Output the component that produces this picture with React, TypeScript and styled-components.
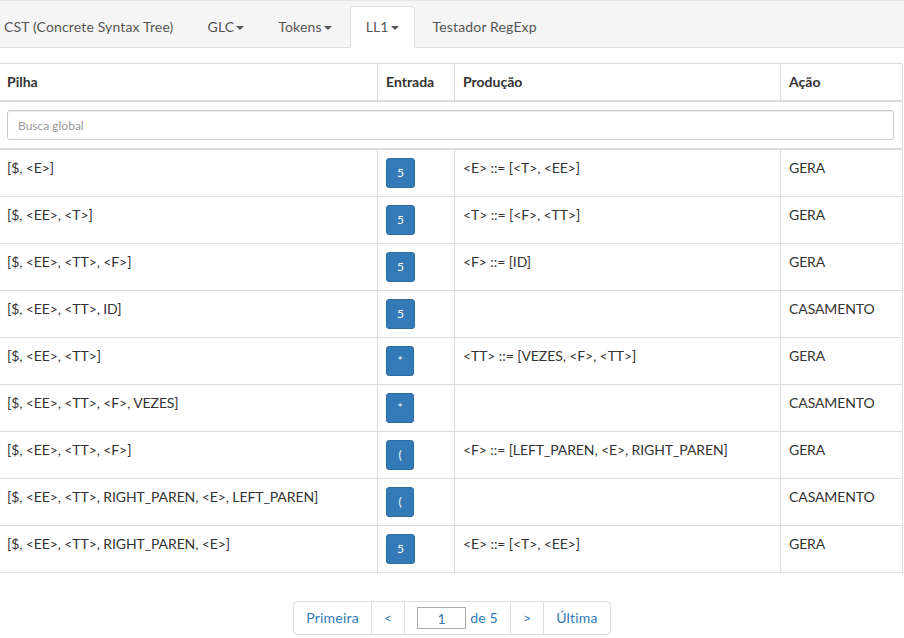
import React from "react";
import styled, { createGlobalStyle } from "styled-components";

const Global = createGlobalStyle`
  * { box-sizing: border-box; }
  html, body { margin: 0; padding: 0; background: #fff; }
  body {
    font-family: Lato, "Open Sans", "Liberation Sans", sans-serif;
    font-size: 14px;
    line-height: 20px;
    color: #333;
    overflow: hidden;
  }
`;

const NavBar = styled.div`
  background: #f5f5f5;
  border-top: 1px solid #e5e5e5;
  border-bottom: 1px solid #ddd;
  padding-top: 5px;
  height: 48px;
`;

const Tabs = styled.ul`
  display: flex;
  list-style: none;
  margin: 0 0 0 -12px;
  padding: 0;
`;

const Tab = styled.li<{ $active?: boolean }>`
  margin-right: 2px;
  margin-bottom: -1px;
  padding: 10px 15px;
  line-height: 20px;
  height: 42px;
  white-space: nowrap;
  letter-spacing: 0.15px;
  color: #555;
  border: 1px solid ${(p) => (p.$active ? "#ddd" : "transparent")};
  border-bottom-color: ${(p) => (p.$active ? "#fff" : "transparent")};
  border-radius: 4px 4px 0 0;
  background: ${(p) => (p.$active ? "#fff" : "transparent")};
`;

const Caret = styled.span`
  display: inline-block;
  width: 0;
  height: 0;
  margin-left: 2px;
  vertical-align: middle;
  border-top: 4px solid #555;
  border-left: 4px solid transparent;
  border-right: 4px solid transparent;
`;

const Table = styled.div`
  margin: 15px 0 0 -2px;
  width: 905px;
  border-top: 1px solid #ddd;
`;

const Row = styled.div<{ $thick?: boolean }>`
  display: grid;
  grid-template-columns: 379px 77px 326px 123px;
  border-bottom: ${(p) => (p.$thick ? "2px" : "1px")} solid #ddd;
`;

const Cell = styled.div<{ $last?: boolean }>`
  padding: 8px;
  border-left: 1px solid #ddd;
  border-right: ${(p) => (p.$last ? "1px solid #ddd" : "none")};
  white-space: nowrap;
  letter-spacing: -0.1px;
  min-height: 46px;
`;

const HeadCell = styled(Cell)`
  font-weight: 700;
  letter-spacing: 0;
  min-height: 36px;
`;

const SearchCell = styled.div`
  grid-column: 1 / -1;
  padding: 8px;
  border-left: 1px solid #ddd;
  border-right: 1px solid #ddd;
`;

const SearchInput = styled.input`
  display: block;
  width: 100%;
  height: 30px;
  padding: 5px 10px;
  font-family: inherit;
  font-size: 12px;
  line-height: 18px;
  color: #555;
  border: 1px solid #ccc;
  border-radius: 3px;
  box-shadow: inset 0 1px 1px rgba(0, 0, 0, 0.075);
  outline: none;
  &::placeholder { color: #999; }
`;

const TokenButton = styled.span`
  display: inline-block;
  min-width: 28px;
  height: 30px;
  padding: 5px 10px;
  font-size: 12px;
  line-height: 18px;
  text-align: center;
  letter-spacing: 0;
  color: #fff;
  background: #337ab7;
  border: 1px solid #2e6da4;
  border-radius: 3px;
`;

const Pager = styled.div`
  display: flex;
  justify-content: center;
  margin-top: 28px;
`;

const PageList = styled.div`
  display: inline-flex;
  border: 1px solid #ddd;
  border-radius: 4px;
`;

const PageItem = styled.span<{ $first?: boolean }>`
  display: flex;
  align-items: center;
  gap: 4px;
  height: 32px;
  padding: 0 12px;
  color: #337ab7;
  letter-spacing: 0.2px;
  border-left: ${(p) => (p.$first ? "none" : "1px solid #ddd")};
  white-space: nowrap;
`;

const PageInput = styled.input`
  width: 49px;
  height: 22px;
  padding: 0 2px;
  font-family: inherit;
  font-size: 14px;
  color: #337ab7;
  text-align: center;
  border: 1px solid #a9a9a9;
  outline: none;
`;

type Step = [string, string, string, string];

const steps: Step[] = [
  ["[$, <E>]", "5", "<E> ::= [<T>, <EE>]", "GERA"],
  ["[$, <EE>, <T>]", "5", "<T> ::= [<F>, <TT>]", "GERA"],
  ["[$, <EE>, <TT>, <F>]", "5", "<F> ::= [ID]", "GERA"],
  ["[$, <EE>, <TT>, ID]", "5", "", "CASAMENTO"],
  ["[$, <EE>, <TT>]", "*", "<TT> ::= [VEZES, <F>, <TT>]", "GERA"],
  ["[$, <EE>, <TT>, <F>, VEZES]", "*", "", "CASAMENTO"],
  ["[$, <EE>, <TT>, <F>]", "(", "<F> ::= [LEFT_PAREN, <E>, RIGHT_PAREN]", "GERA"],
  ["[$, <EE>, <TT>, RIGHT_PAREN, <E>, LEFT_PAREN]", "(", "", "CASAMENTO"],
  ["[$, <EE>, <TT>, RIGHT_PAREN, <E>]", "5", "<E> ::= [<T>, <EE>]", "GERA"],
];

export default function App() {
  return (
    <>
      <Global />
      <NavBar>
        <Tabs>
          <Tab>CST (Concrete Syntax Tree)</Tab>
          <Tab>
            GLC<Caret />
          </Tab>
          <Tab>
            Tokens<Caret />
          </Tab>
          <Tab $active>
            LL1<Caret />
          </Tab>
          <Tab>Testador RegExp</Tab>
        </Tabs>
      </NavBar>
      <Table>
        <Row $thick>
          <HeadCell>Pilha</HeadCell>
          <HeadCell>Entrada</HeadCell>
          <HeadCell>Produção</HeadCell>
          <HeadCell $last>Ação</HeadCell>
        </Row>
        <Row $thick>
          <SearchCell>
            <SearchInput placeholder="Busca global" />
          </SearchCell>
        </Row>
        {steps.map((s, i) => (
          <Row key={i}>
            <Cell>{s[0]}</Cell>
            <Cell>
              <TokenButton>{s[1]}</TokenButton>
            </Cell>
            <Cell>{s[2]}</Cell>
            <Cell $last>{s[3]}</Cell>
          </Row>
        ))}
      </Table>
      <Pager>
        <PageList>
          <PageItem $first>Primeira</PageItem>
          <PageItem>&lt;</PageItem>
          <PageItem>
            <PageInput defaultValue="1" />
            de 5
          </PageItem>
          <PageItem>&gt;</PageItem>
          <PageItem>Última</PageItem>
        </PageList>
      </Pager>
    </>
  );
}
